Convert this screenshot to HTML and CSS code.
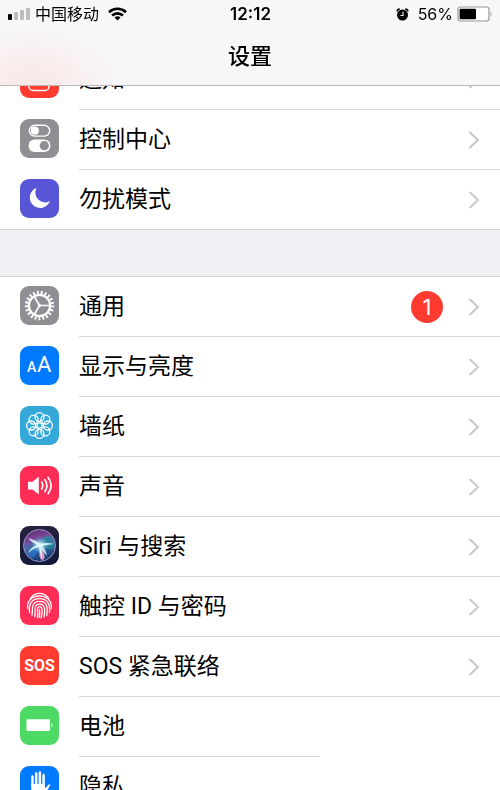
FILE: index.html
```
<!DOCTYPE html>
<html lang="zh-CN">
<head>
    <meta charset="UTF-8">
    <meta name="viewport" content="width=device-width, initial-scale=1.0">
    <title>设置</title>
    <link rel="stylesheet" href="styles.css">
</head>
<body>
    <header class="header">
        <div class="status-bar">
            <div class="status-left">
                <svg class="signal" width="23" height="12" viewBox="0 0 23 12">
                    <rect x="0" y="6" width="4" height="6" rx="1" fill="#000"/>
                    <rect x="6" y="4" width="4" height="8" rx="1" fill="#bdbdbf"/>
                    <rect x="12" y="2" width="4" height="10" rx="1" fill="#bdbdbf"/>
                    <rect x="18" y="0" width="4" height="12" rx="1" fill="#bdbdbf"/>
                </svg>
                <span class="carrier">中国移动</span>
                <svg class="wifi" width="19" height="14" viewBox="0 0 19 14" fill="none" stroke="#000" stroke-width="2.6">
                    <path d="M1 5.2a12.3 12.3 0 0 1 17 0"/>
                    <path d="M4.1 8.5a7.8 7.8 0 0 1 10.8 0"/>
                    <path d="M9.5 13.6L6.5 10.6a4.3 4.3 0 0 1 6 0z" fill="#000" stroke="none"/>
                </svg>
            </div>
            <time class="clock">12:12</time>
            <div class="status-right">
                <svg class="alarm" width="13" height="13" viewBox="0 0 13 13">
                    <circle cx="6.5" cy="7" r="5.5"/>
                    <path d="M1 3.4A3 3 0 0 1 3.8 1M12 3.4A3 3 0 0 0 9.2 1" fill="none" stroke="#000" stroke-width="1.6"/>
                    <path d="M7 3.8v3.7H4.4" fill="none" stroke="#fff" stroke-width="1.1"/>
                </svg>
                <span class="percent">56%</span>
                <svg class="battery" width="36" height="16" viewBox="0 0 36 16">
                    <rect x="1" y="1" width="31" height="14" rx="2.5" fill="#fff" stroke="#99999b" stroke-width="1.2"/>
                    <rect x="2.6" y="2.7" width="16.4" height="10.6" rx="1"/>
                    <path d="M33.6 5.6q2.2 2.4 0 4.8z" fill="#99999b"/>
                </svg>
            </div>
        </div>
        <h1 class="title">设置</h1>
    </header>

    <main class="settings">
        <ul class="group">
            <li>
                <a class="row" href="#notifications">
                    <svg class="icon" viewBox="0 0 39 39">
                        <rect width="39" height="39" rx="9" fill="#ff3b30"/>
                        <rect x="9" y="9" width="20" height="22.5" rx="4" fill="none" stroke="#fff" stroke-width="1.5"/>
                        <circle cx="28" cy="11" r="5" fill="#fff"/>
                    </svg>
                    <span class="row-body">
                        <span class="label">通知</span>
                        <svg class="chevron" viewBox="0 0 12 20"><path d="M1.5 2l8.5 8-8.5 8"/></svg>
                    </span>
                </a>
            </li>
            <li>
                <a class="row" href="#control-center">
                    <svg class="icon" viewBox="0 0 39 39">
                        <rect width="39" height="39" rx="9" fill="#8e8e93"/>
                        <rect x="9.3" y="6.3" width="20.4" height="10.8" rx="5.4" fill="none" stroke="#fff" stroke-width="1.4"/>
                        <circle cx="14.8" cy="11.7" r="4.1" fill="#fff"/>
                        <rect x="8.5" y="20.5" width="22" height="12.5" rx="6.2" fill="#fff"/>
                        <circle cx="24.3" cy="26.7" r="4.6" fill="#8e8e93"/>
                    </svg>
                    <span class="row-body">
                        <span class="label">控制中心</span>
                        <svg class="chevron" viewBox="0 0 12 20"><path d="M1.5 2l8.5 8-8.5 8"/></svg>
                    </span>
                </a>
            </li>
            <li>
                <a class="row" href="#do-not-disturb">
                    <svg class="icon" viewBox="0 0 39 39">
                        <rect width="39" height="39" rx="9" fill="#5856d6"/>
                        <path d="M16.6 8.8A10.4 10.4 0 1 0 30 22.1 9.8 9.8 0 0 1 16.6 8.8z" fill="#fff"/>
                    </svg>
                    <span class="row-body">
                        <span class="label">勿扰模式</span>
                        <svg class="chevron" viewBox="0 0 12 20"><path d="M1.5 2l8.5 8-8.5 8"/></svg>
                    </span>
                </a>
            </li>
        </ul>

        <ul class="group">
            <li>
                <a class="row" href="#general">
                    <svg class="icon" viewBox="0 0 39 39" fill="none" stroke="#fff">
                        <rect width="39" height="39" rx="9" fill="#8e8e93" stroke="none"/>
                        <circle cx="19.5" cy="19.5" r="10.6" stroke-width="2.2"/>
                        <circle cx="19.5" cy="19.5" r="13.1" stroke-width="3.2" stroke-dasharray="1.9 2.015"/>
                        <path d="M19.5 19.5h10M19.5 19.5l-5.2-9M19.5 19.5l-5.2 9" stroke-width="1.7"/>
                        <circle cx="19.5" cy="19.5" r="1.2" fill="#fff"/>
                    </svg>
                    <span class="row-body">
                        <span class="label">通用</span>
                        <span class="badge">1</span>
                        <svg class="chevron" viewBox="0 0 12 20"><path d="M1.5 2l8.5 8-8.5 8"/></svg>
                    </span>
                </a>
            </li>
            <li>
                <a class="row" href="#display">
                    <svg class="icon" viewBox="0 0 39 39">
                        <rect width="39" height="39" rx="9" fill="#007aff"/>
                        <text class="icon-text icon-text-small" x="7" y="26">A</text>
                        <text class="icon-text" x="17" y="26">A</text>
                    </svg>
                    <span class="row-body">
                        <span class="label">显示与亮度</span>
                        <svg class="chevron" viewBox="0 0 12 20"><path d="M1.5 2l8.5 8-8.5 8"/></svg>
                    </span>
                </a>
            </li>
            <li>
                <a class="row" href="#wallpaper">
                    <svg class="icon" viewBox="0 0 39 39" fill="none" stroke="#fff" stroke-width="1.3">
                        <rect width="39" height="39" rx="9" fill="#35a8da" stroke="none"/>
                        <circle cx="19.5" cy="11.1" r="4.5"/>
                        <circle cx="25.4" cy="13.6" r="4.5"/>
                        <circle cx="27.9" cy="19.5" r="4.5"/>
                        <circle cx="25.4" cy="25.4" r="4.5"/>
                        <circle cx="19.5" cy="27.9" r="4.5"/>
                        <circle cx="13.6" cy="25.4" r="4.5"/>
                        <circle cx="11.1" cy="19.5" r="4.5"/>
                        <circle cx="13.6" cy="13.6" r="4.5"/>
                        <circle cx="19.5" cy="19.5" r="2.6"/>
                    </svg>
                    <span class="row-body">
                        <span class="label">墙纸</span>
                        <svg class="chevron" viewBox="0 0 12 20"><path d="M1.5 2l8.5 8-8.5 8"/></svg>
                    </span>
                </a>
            </li>
            <li>
                <a class="row" href="#sounds">
                    <svg class="icon" viewBox="0 0 39 39" fill="none" stroke="#fff" stroke-width="1.7" stroke-linecap="round">
                        <rect width="39" height="39" rx="9" fill="#ff2d55" stroke="none"/>
                        <path d="M8 15.8h4.5l6.3-5v17.6l-6.3-5H8z" fill="#fff" stroke="none"/>
                        <path d="M21.7 16q2.2 3.5 0 7.1M24.9 13.7q4 5.8 0 11.7M28.1 11.5q5.9 8 0 16.2"/>
                    </svg>
                    <span class="row-body">
                        <span class="label">声音</span>
                        <svg class="chevron" viewBox="0 0 12 20"><path d="M1.5 2l8.5 8-8.5 8"/></svg>
                    </span>
                </a>
            </li>
            <li>
                <a class="row" href="#siri">
                    <svg class="icon" viewBox="0 0 39 39">
                        <defs>
                            <linearGradient id="siri-bg" x1="0" y1="0" x2="0" y2="1">
                                <stop offset="0" stop-color="#28213f"/>
                                <stop offset="1" stop-color="#101a38"/>
                            </linearGradient>
                            <linearGradient id="siri-orb" x1="0" y1="0" x2="0.3" y2="1">
                                <stop offset="0" stop-color="#4a2a66"/>
                                <stop offset="0.35" stop-color="#7d4597"/>
                                <stop offset="0.6" stop-color="#3d6fae"/>
                                <stop offset="1" stop-color="#173d75"/>
                            </linearGradient>
                            <radialGradient id="siri-glow">
                                <stop offset="0" stop-color="#fff"/>
                                <stop offset="0.3" stop-color="#c9f4fa" stop-opacity="0.7"/>
                                <stop offset="1" stop-color="#39b8c9" stop-opacity="0"/>
                            </radialGradient>
                        </defs>
                        <rect width="39" height="39" rx="9" fill="url(#siri-bg)"/>
                        <circle cx="19.5" cy="19.5" r="16" fill="url(#siri-orb)" stroke="#a394c3" stroke-width="1"/>
                        <path d="M20 19Q25 6 31 11q6 7 2 12-6 1-13-4z" fill="#238a98" opacity="0.7"/>
                        <path d="M19 20Q5 25 9 30q7 5 10-10z" fill="#2a72c9" opacity="0.8"/>
                        <path d="M20 20q-2 13 2 14 6-1-2-14z" fill="#e39bd0"/>
                        <circle cx="20" cy="19" r="9" fill="url(#siri-glow)"/>
                        <path d="M8 12q8 2 12 6 7-2 14 0-7 1-12 2 4 4 5 10-4-4-6-8 1 6 1 10-3-5-3-11-5 1-11 6 3-6 9-8-5-2-9-7z" fill="#e4fcff" opacity="0.85"/>
                    </svg>
                    <span class="row-body">
                        <span class="label">Siri 与搜索</span>
                        <svg class="chevron" viewBox="0 0 12 20"><path d="M1.5 2l8.5 8-8.5 8"/></svg>
                    </span>
                </a>
            </li>
            <li>
                <a class="row" href="#touch-id">
                    <svg class="icon" viewBox="0 0 39 39" fill="none" stroke="#fff" stroke-width="1.3" stroke-linecap="round">
                        <rect width="39" height="39" rx="9" fill="#ff2d55" stroke="none"/>
                        <path d="M10.5 12.2Q14 7.4 19.5 7.4t9 4.8"/>
                        <path d="M7.8 22.5C6.4 15 12 10 19.5 10S32.2 15 31.2 22.5"/>
                        <path d="M9.6 26.5C8.5 19 11 12.7 19.5 12.7S30.5 19 29.4 26.5"/>
                        <path d="M12 29.2C13 25 10.2 15.4 19.5 15.4S27.5 24 26.8 29.5"/>
                        <path d="M14.7 30.7C16 26 13 18.1 19.5 18.1S25 26 24 31"/>
                        <path d="M17.3 31.5C18.5 27 16 20.7 19.5 20.7S22.3 27 21 31.8"/>
                        <path d="M19.5 23.5q.4 4-.3 8"/>
                    </svg>
                    <span class="row-body">
                        <span class="label">触控 ID 与密码</span>
                        <svg class="chevron" viewBox="0 0 12 20"><path d="M1.5 2l8.5 8-8.5 8"/></svg>
                    </span>
                </a>
            </li>
            <li>
                <a class="row" href="#sos">
                    <span class="icon icon-sos">SOS</span>
                    <span class="row-body">
                        <span class="label">SOS 紧急联络</span>
                        <svg class="chevron" viewBox="0 0 12 20"><path d="M1.5 2l8.5 8-8.5 8"/></svg>
                    </span>
                </a>
            </li>
            <li>
                <a class="row row-short" href="#battery">
                    <svg class="icon" viewBox="0 0 39 39" fill="#fff">
                        <rect width="39" height="39" rx="9" fill="#4cd964"/>
                        <rect x="6.5" y="13.3" width="23.5" height="11.7" rx="1"/>
                        <path d="M31.2 16.7q2.6 2.4 0 4.8z"/>
                    </svg>
                    <span class="row-body">
                        <span class="label">电池</span>
                    </span>
                </a>
            </li>
            <li>
                <a class="row row-short" href="#privacy">
                    <svg class="icon" viewBox="0 0 39 39" fill="none" stroke="#fff" stroke-width="2.5" stroke-linecap="round">
                        <rect width="39" height="39" rx="9" fill="#007aff" stroke="none"/>
                        <path d="M12.5 20V10.500M16.200 18V7.500M19.900 18V6.500M23.600 19V9"/>
                        <path d="M11.3 18h13.6v4.5l3.3-3.6q1.3-1.2 2.2-.2L25.5 28q-2 4.500-6.500 4.500-7.700 0-7.700-8z" fill="#fff" stroke="none"/>
                    </svg>
                    <span class="row-body">
                        <span class="label">隐私</span>
                    </span>
                </a>
            </li>
        </ul>
    </main>
</body>
</html>
```
FILE: styles.css
```
* {
    box-sizing: border-box;
}

html {
    scrollbar-width: none;
}

body {
    font-family: Inter, "Noto Sans CJK SC", sans-serif;
    background-color: #efeff4;
    color: #000;
    margin: 0;
}

/* Status bar and title */
.header {
    position: fixed;
    top: 0;
    left: 0;
    right: 0;
    z-index: 1;
    height: 86px;
    background: radial-gradient(ellipse 90px 60px at 32px 100%, #fae6e5, #f7f7f9);
    border-bottom: 1px solid #b9b9bb;
}

.status-bar {
    display: grid;
    grid-template-columns: 1fr auto 1fr;
    align-items: center;
    height: 28px;
    padding: 0 7px 0 8px;
    font-size: 16px;
    line-height: 28px;
}

.status-left,
.status-right {
    display: flex;
    align-items: center;
}

.status-right {
    justify-content: flex-end;
}

.carrier {
    margin: 0 9px 0 4px;
}

.clock {
    font-size: 17px;
    font-weight: 600;
}

.percent {
    margin: 0 4px 0 9px;
}

.title {
    margin: 0;
    font-size: 22px;
    font-weight: 500;
    line-height: 56px;
    text-align: center;
}

/* Settings list */
.settings {
    padding-top: 50px;
}

.group {
    list-style: none;
    margin: 0 0 46px;
    padding: 0;
    background-color: #fff;
    border-top: 1px solid #d0d0d4;
    border-bottom: 1px solid #d0d0d4;
}

.group:first-child {
    border-top: none;
}

.row {
    display: flex;
    align-items: center;
    padding-left: 20px;
    color: inherit;
    text-decoration: none;
}

.icon {
    flex: none;
    width: 39px;
    height: 39px;
    margin: 0 20px 3px 0;
}

.icon-text {
    fill: #fff;
    font-family: Roboto, sans-serif;
    font-size: 22px;
}

.icon-text-small {
    font-size: 14px;
    font-weight: 500;
}

.icon-sos {
    border-radius: 9px;
    background-color: #ff3b30;
    color: #fff;
    font-family: Roboto, sans-serif;
    font-size: 16px;
    font-weight: 700;
    line-height: 39px;
    text-align: center;
}

.row-body {
    flex: 1;
    display: flex;
    align-items: center;
    height: 60px;
    padding-right: 20px;
    border-bottom: 1px solid #dadadc;
}

.group li:last-child .row-body {
    height: 59px;
    border-bottom: none;
}

.row-short .row-body {
    max-width: 241px;
}

.label {
    flex: 1;
    font-family: Roboto, "Noto Sans CJK SC", sans-serif;
    font-size: 23px;
    line-height: 30px;
}

.badge {
    width: 32px;
    margin-right: 25px;
    border-radius: 50%;
    background-color: #ff3b30;
    color: #fff;
    font-size: 22px;
    line-height: 32px;
    text-align: center;
}

.chevron {
    width: 12px;
    height: 20px;
    fill: none;
    stroke: #c7c7cc;
    stroke-width: 2;
}
```
